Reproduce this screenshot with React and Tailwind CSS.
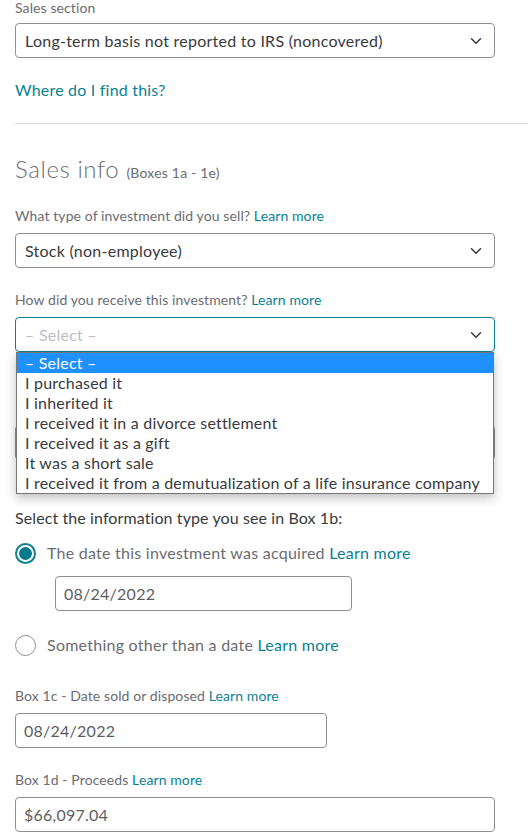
import { ChevronDown } from "lucide-react"

const TEAL = "text-[#0a8193]"

function Label({ children, learn }) {
  return (
    <p className="text-[14px] leading-4 tracking-[0.1px] text-[#6b6c72]">
      {children}
      {learn && <span className={`${TEAL}`}> Learn more</span>}
    </p>
  )
}

function SelectBox({ value, placeholder, focused, children }) {
  return (
    <div className="relative">
      <div
        className={`flex h-[35px] items-center justify-between rounded-[4px] border bg-white pl-[9px] pr-[9px] ${
          focused ? "border-[#0a8193]" : "border-[#8d9096]"
        }`}
      >
        <span className={`text-[16px] tracking-[0.25px] ${placeholder ? "text-[#babec5]" : "text-[#393a3d]"}`}>
          {value}
        </span>
        <ChevronDown className="h-[18px] w-[18px] text-[#393a3d]" strokeWidth={2} />
      </div>
      {children}
    </div>
  )
}

function TextBox({ value, className = "" }) {
  return (
    <div
      className={`flex h-[35px] items-center rounded-[4px] border border-[#8d9096] bg-white pl-[8px] text-[16px] tracking-[0.25px] text-[#5d5e63] ${className}`}
    >
      {value}
    </div>
  )
}

const OPTIONS = [
  "– Select –",
  "I purchased it",
  "I inherited it",
  "I received it in a divorce settlement",
  "I received it as a gift",
  "It was a short sale",
  "I received it from a demutualization of a life insurance company",
]

export default function App() {
  return (
    <div className="min-h-screen bg-white font-['Lato',sans-serif] text-[#393a3d]">
      <div className="w-[528px] overflow-hidden">
        {/* ---------- Sales section ---------- */}
        <div className="px-[15px] pr-[33px]">
          <Label>Sales section</Label>
          <div className="mt-[7px]">
            <SelectBox value="Long-term basis not reported to IRS (noncovered)" />
          </div>
          <p className={`mt-[20px] text-[16px] tracking-[0.2px] ${TEAL}`}>Where do I find this?</p>
        </div>

        <div className="ml-[15px] mt-[21px] border-t border-[#dcdcdc]" />

        {/* ---------- Sales info ---------- */}
        <div className="px-[15px] pr-[33px]">
          <h2 className="mt-[29px] text-[24px] font-light leading-8 tracking-[0.6px] text-[#6b6c72]">
            Sales info <span className="text-[14px] font-normal tracking-[0.2px]">(Boxes 1a - 1e)</span>
          </h2>

          <div className="mt-[19px]">
            <Label learn>What type of investment did you sell?</Label>
          </div>
          <div className="mt-[9px]">
            <SelectBox value="Stock (non-employee)" />
          </div>

          <div className="mt-[24px]">
            <Label learn>How did you receive this investment?</Label>
          </div>
          <div className="mt-[9px]">
            <SelectBox value="– Select –" placeholder focused>
              <ul className="absolute left-[1px] top-full z-10 w-[478px] border border-[#767676] bg-white text-[16px] leading-5 tracking-[0.2px] text-[#393a3d] shadow-[0_4px_10px_rgba(0,0,0,0.25)]">
                {OPTIONS.map((o, i) => (
                  <li
                    key={o}
                    className={`h-5 pl-[8px] ${i === 0 ? "bg-[#1e90ff] text-white" : ""}`}
                  >
                    {o}
                  </li>
                ))}
              </ul>
            </SelectBox>
          </div>

          {/* field hidden behind the open list */}
          <div className="mt-[73px]">
            <TextBox value="" />
          </div>

          {/* ---------- Box 1b ---------- */}
          <p className="mt-[48px] text-[16px] leading-5 tracking-[0.1px] text-[#393a3d]">
            Select the information type you see in Box 1b:
          </p>

          <div className="mt-[13px] flex items-center gap-[11px]">
            <span className="flex h-[21px] w-[21px] items-center justify-center rounded-full border-2 border-[#0a8193]">
              <span className="h-[13px] w-[13px] rounded-full bg-[#047a8a]" />
            </span>
            <span className="text-[16px] tracking-[0.25px] text-[#6b6c72]">
              The date this investment was acquired <span className={TEAL}>Learn more</span>
            </span>
          </div>
          <div className="mt-[11px] pl-[40px]">
            <TextBox value="08/24/2022" className="w-[297px]" />
          </div>

          <div className="mt-[22px] flex items-center gap-[11px]">
            <span className="h-[21px] w-[21px] rounded-full border border-[#8d9096]" />
            <span className="text-[16px] tracking-[0.25px] text-[#6b6c72]">
              Something other than a date <span className={TEAL}>Learn more</span>
            </span>
          </div>

          {/* ---------- Box 1c ---------- */}
          <div className="mt-[31px]">
            <Label learn>Box 1c - Date sold or disposed</Label>
          </div>
          <div className="mt-[9px]">
            <TextBox value="08/24/2022" className="w-[312px]" />
          </div>

          {/* ---------- Box 1d ---------- */}
          <div className="mt-[24px]">
            <Label learn>Box 1d - Proceeds</Label>
          </div>
          <div className="mt-[9px]">
            <TextBox value="$66,097.04" />
          </div>
        </div>
      </div>
    </div>
  )
}
